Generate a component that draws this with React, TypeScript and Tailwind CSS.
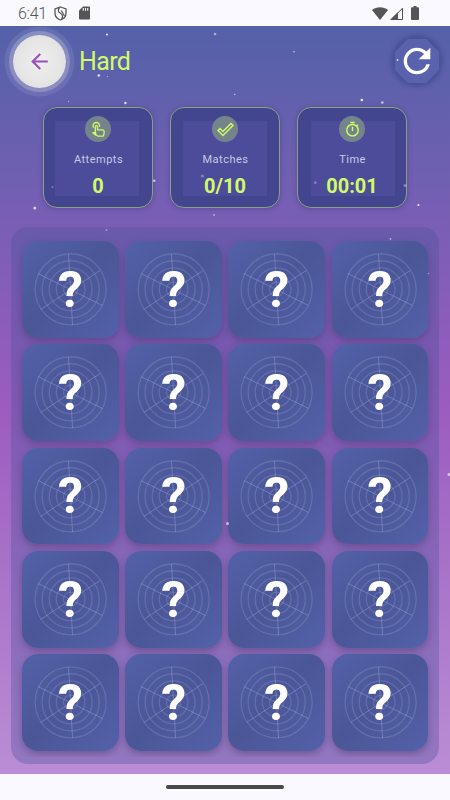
import React from "react";
import { MdArrowBack, MdDoneOutline, MdOutlineTimer, MdRefresh } from "react-icons/md";

// [x, y, radius, opacity] in screen pixels
const STARS: [number, number, number, number][] = [
  [107, 34.5, 1, 0.9], [215, 34, 1.3, 0.5], [294, 51.7, 0.8, 0.7], [98.8, 75.5, 1.3, 0.8],
  [107.3, 76.5, 0.5, 0.7], [234.7, 94.5, 0.8, 0.6], [125.4, 103, 1.3, 0.75], [361.8, 100, 1.2, 0.9],
  [382.3, 102.5, 1.3, 0.65], [397.5, 60, 0.9, 0.8], [68.5, 101.3, 0.6, 0.6], [34.8, 208, 1.5, 0.7],
  [154.2, 180.7, 1.2, 0.7], [52.5, 187, 1, 0.3], [202.4, 176, 1.6, 0.3], [315.3, 182.7, 1.4, 0.3],
  [405, 185.5, 1.5, 0.35], [418.4, 205, 1.1, 0.85], [214, 215, 0.9, 0.5], [106.5, 230, 1, 0.4],
  [390.5, 239, 0.9, 0.5], [428.5, 273.5, 0.8, 0.4], [227.5, 523.5, 1.5, 0.6], [449, 474.5, 1.5, 0.6],
];

function TapIcon({ className }: { className?: string }) {
  return (
    <svg className={className} viewBox="4.500 4.500 17 17" fill="none" stroke="currentColor" strokeWidth="1.300" strokeLinejoin="round">
      <path d="M8 11.300C6.800 8.600 8.300 6 10.800 6c2.400 0 3.700 2 3.200 4.300" />
      <path d="M9.800 16V10.300a1.100 1.100 0 0 1 2.200 0v3h4.700a2 2 0 0 1 2 2.200l-.5 3.100a1.300 1.300 0 0 1-1.300 1.100h-4.400L7.600 16.500z" />
      <path fill="currentColor" d="M7.600 16.200h2.600v2.200z" />
    </svg>
  );
}

const STATS = [
  { label: "Attempts", value: "0", Icon: TapIcon, inset: "left-[11px] right-[13px]" },
  { label: "Matches", value: "0/10", Icon: MdDoneOutline, inset: "left-[12px] right-[12px]" },
  { label: "Time", value: "00:01", Icon: MdOutlineTimer, inset: "left-[13px] right-[11px]" },
];

function StatusBar() {
  return (
    <div className="flex h-[26px] shrink-0 items-center bg-[#f9f9ff] pl-[18px] pr-[31px] text-[#555558]">
      <span className="mt-[2px] w-[34px] text-[16px] font-light leading-none tracking-[-0.3px]">6:41</span>
      <svg className="ml-[2px] h-[15px] w-[13px]" viewBox="0 0 13 15" fill="none" stroke="currentColor" strokeWidth="1.300">
        <path d="M6.500 1 12 3v4.300c0 3-2.300 5.600-5.500 6.700C3.300 12.900 1 10.300 1 7.300V3z" />
        <path d="M5.500 1.500C3.400 4.200 4.200 5.800 6.500 7.200C8.900 8.700 9 11 7.500 13.500" />
        <path d="M7.300 4.500 10.500 10" />
      </svg>
      <svg className="ml-[12px] h-[14px] w-[11px]" viewBox="0 0 11 14">
        <path fill="currentColor" d="M4 .5h6a1 1 0 0 1 1 1v11a1 1 0 0 1-1 1H1a1 1 0 0 1-1-1V4.500z" />
        <path stroke="#f9f9ff" strokeWidth="1.100" d="M4.300 2v2.700M6.500 2v2.700M8.700 2v2.700" />
      </svg>
      <div className="ml-auto flex items-center">
        <svg className="h-[13px] w-[16px]" viewBox="0 0 16 13"><path fill="currentColor" d="M0 3C4.600-.7 11.400-.7 16 3L8 13z" /></svg>
        <svg className="ml-[2px] h-[13px] w-[13px]" viewBox="0 0 13 13">
          <path fill="none" stroke="currentColor" d="M1.200 12.500 12.500 1.200V12.500z" />
          <path fill="currentColor" d="M0 13 8 5V13z" />
        </svg>
        <svg className="ml-[8px] h-[14px] w-[8px]" viewBox="0 0 8 14"><path fill="currentColor" d="M2.500 0h3v1.200H7a1 1 0 0 1 1 1V13a1 1 0 0 1-1 1H1a1 1 0 0 1-1-1V2.200a1 1 0 0 1 1-1h1.500z" /></svg>
      </div>
    </div>
  );
}

function Header() {
  return (
    <header className="flex h-[70px] items-center pl-[13px] pr-[11px]">
      <button className="flex size-[53px] items-center justify-center rounded-full bg-[radial-gradient(circle,#eeeeee_0%,#e6e6e6_55%,#d9d9da_100%)] shadow-[0_0_0_4px_rgba(255,255,255,0.22),0_0_0_8.500px_rgba(255,255,255,0.09)]">
        <MdArrowBack className="size-[25px] text-[#9550bd]" />
      </button>
      <h1 className="ml-[13px] text-[25px] font-normal leading-none tracking-[-0.6px] text-[#d2fa68]">Hard</h1>
      <button className="ml-auto flex size-[44px] items-center justify-center rounded-full bg-[#4a5499] shadow-[0_0_4px_4px_rgba(62,70,135,0.6)]">
        <span className="flex size-[44px] items-center justify-center bg-[#5a62ae] [clip-path:polygon(29%_0,71%_0,100%_29%,100%_71%,71%_100%,29%_100%,0_71%,0_29%)]">
          <MdRefresh className="size-[40px] shrink-0 text-white" />
        </span>
      </button>
    </header>
  );
}

function StatCard({ label, value, Icon, inset }: (typeof STATS)[number]) {
  return (
    <div className="relative flex h-[101px] w-[110px] flex-col items-center rounded-[14px] border border-[#8ba080] bg-[#43468f] pt-[8px] shadow-[0_1px_5px_rgba(50,40,110,0.35)]">
      <div className={`absolute top-[13px] bottom-[11px] bg-[#4c4c9b] ${inset}`} />
      <div className="relative flex size-[26px] items-center justify-center rounded-full bg-[#75848c]">
        <Icon className="size-[17px] text-[#d2fa68]" />
      </div>
      <span className="relative mt-[11px] pl-[1px] text-[11px] leading-[14px] tracking-[0.5px] text-[#c8c8e2]">{label}</span>
      <span className="relative mt-[7px] text-[20px] font-bold leading-[24px] text-[#d2fa68]">{value}</span>
    </div>
  );
}

function GameCard() {
  return (
    <div className="relative flex items-center justify-center rounded-[16px] bg-[linear-gradient(135deg,#5361a9_0%,#4a5696_48%,#5361a9_100%)] shadow-[0_3px_7px_rgba(75,50,105,0.45)]">
      <svg className="absolute inset-0 size-full" viewBox="0 0 96.750 96.750" fill="none" stroke="#a5b0e0" strokeOpacity="0.25" strokeWidth="1.300">
        {[7.2, 14.4, 21.5, 28.6, 35.600].map((r) => <circle key={r} cx="48.700" cy="48.300" r={r} />)}
        <path strokeOpacity="0.4" strokeWidth="1" d="M46.600 12.900 50.600 84M78 29.600 18.700 68.500M16 32.500 80.600 64.500" />
      </svg>
      <span className="relative pt-[1px] text-[50px] font-bold leading-none text-white">?</span>
    </div>
  );
}

export default function App() {
  return (
    <div className="relative flex h-[800px] w-[450px] flex-col overflow-hidden font-['Roboto',sans-serif]">
      <StatusBar />
      <main className="flex h-[747.500px] shrink-0 flex-col bg-[linear-gradient(180deg,#5461a9_0%,#9a5cbf_50%,#ba8dd5_100%)]">
        <Header />
        <section className="mt-[11px] ml-[43px] flex gap-[17px]">
          {STATS.map((s) => <StatCard key={s.label} {...s} />)}
        </section>
        <section className="mx-[11px] mt-[19px] h-[537px] rounded-[17px] bg-[#4b549b]/35 pt-[7px] pb-[7px]">
          <div className="grid h-full grid-cols-4 grid-rows-5 gap-[6.500px] overflow-hidden pt-[7px] pb-[6px] pl-[11.200px] pr-[10.800px]">
            {Array.from({ length: 20 }, (_, i) => <GameCard key={i} />)}
          </div>
        </section>
      </main>
      <footer className="flex h-[26.500px] shrink-0 items-center justify-center bg-[#f9f9ff]">
        <div className="h-[4px] w-[118px] rounded-full bg-[#49494c]" />
      </footer>
      <svg className="pointer-events-none absolute inset-0" width="450" height="800" fill="white">
        {STARS.map(([x, y, r, o]) => <circle key={`${x}-${y}`} cx={x} cy={y} r={r} opacity={o} />)}
      </svg>
    </div>
  );
}
